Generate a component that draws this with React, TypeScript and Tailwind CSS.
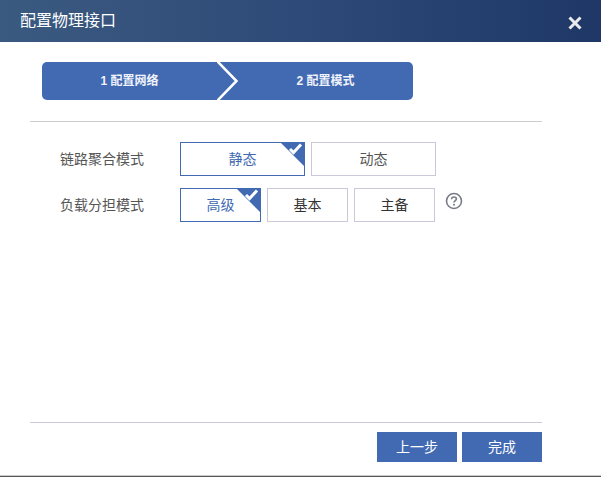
function Option({ label, selected, width, muted }: { label: string; selected?: boolean; width: string; muted?: boolean }) {
  return (
    <button
      className={`relative h-[34px] ${width} border text-sm ${
        selected
          ? 'border-[#426ab3] text-[#426ab3]'
          : muted
            ? 'border-[#c9c9d9] text-[#555555]'
            : 'border-[#c9c9d9] text-[#333333]'
      }`}
    >
      {label}
      {selected && (
        <svg className="absolute -top-px -right-px" width="25" height="25" viewBox="0 0 25 25">
          <path d="M0 0H25V25Z" fill="#426ab3" />
          <path d="M10 7L13.5 10.5L21 2.5" fill="none" stroke="#ffffff" strokeWidth="3" />
        </svg>
      )}
    </button>
  );
}

export default function App() {
  return (
    <div className="flex h-[477px] w-[601px] flex-col overflow-hidden border-b border-b-[#555555] bg-white font-['Liberation_Sans','Noto_Sans_CJK_SC',sans-serif]">
      <div className="flex h-[42px] shrink-0 items-center justify-between bg-gradient-to-r from-[#3b5a80] via-[#2e4a78] to-[#1e3767] pl-5 pr-[18px] text-white">
        <span className="text-base">配置物理接口</span>
        <svg className="mt-1" width="16" height="16" viewBox="0 0 16 16">
          <path d="M2.5 2.5L13.5 13.5M13.5 2.5L2.5 13.5" stroke="#ebebef" strokeWidth="3" />
        </svg>
      </div>

      <div className="ml-[30px] mr-[59px] flex flex-1 flex-col">
        <div className="ml-3 mt-5 flex h-[38px] w-[371px] overflow-hidden rounded-[5px] bg-[#426ab3] text-xs font-bold text-[#f0f3fa]">
          <div className="flex w-[175px] items-center justify-center">1 配置网络</div>
          <svg className="shrink-0" width="21" height="38" viewBox="0 0 21 38">
            <path d="M0 -1L19.5 19L0 39" fill="none" stroke="#ffffff" strokeWidth="2.6" />
          </svg>
          <div className="flex flex-1 items-center justify-center">2 配置模式</div>
        </div>

        <div className="mt-[21px] border-t border-[#cccccc]" />

        <div className="mt-5 flex flex-col gap-3 text-sm text-[#555555]">
          <div className="flex items-center">
            <span className="ml-[30px] w-[120px]">链路聚合模式</span>
            <div className="flex gap-[6px]">
              <Option label="静态" selected width="w-[125px]" />
              <Option label="动态" muted width="w-[125px]" />
            </div>
          </div>
          <div className="flex items-center">
            <span className="ml-[30px] w-[120px]">负载分担模式</span>
            <div className="flex gap-[6px]">
              <Option label="高级" selected width="w-[81px]" />
              <Option label="基本" width="w-[81px]" />
              <Option label="主备" width="w-[81px]" />
            </div>
            <svg className="mb-[9px] ml-[10px]" width="18" height="18" viewBox="0 0 18 18">
              <circle cx="9" cy="9" r="7.5" fill="none" stroke="#777c88" strokeWidth="1.6" />
              <path
                d="M6.6 7.2C6.6 5.8 7.6 5 9 5C10.4 5 11.4 5.8 11.4 7C11.4 8.4 9 8.7 9 10.6"
                fill="none"
                stroke="#777c88"
                strokeWidth="1.6"
              />
              <circle cx="9" cy="12.8" r="1" fill="#777c88" />
            </svg>
          </div>
        </div>

        <div className="mt-auto border-t border-[#c9c9d9]" />
        <div className="mb-[13px] mt-[9px] flex justify-end gap-[5px] text-sm text-white">
          <button className="h-[30px] w-20 bg-[#426ab3]">上一步</button>
          <button className="h-[30px] w-20 bg-[#426ab3]">完成</button>
        </div>
      </div>
      <div className="h-px shrink-0 bg-[#cccccc]" />
    </div>
  );
}
